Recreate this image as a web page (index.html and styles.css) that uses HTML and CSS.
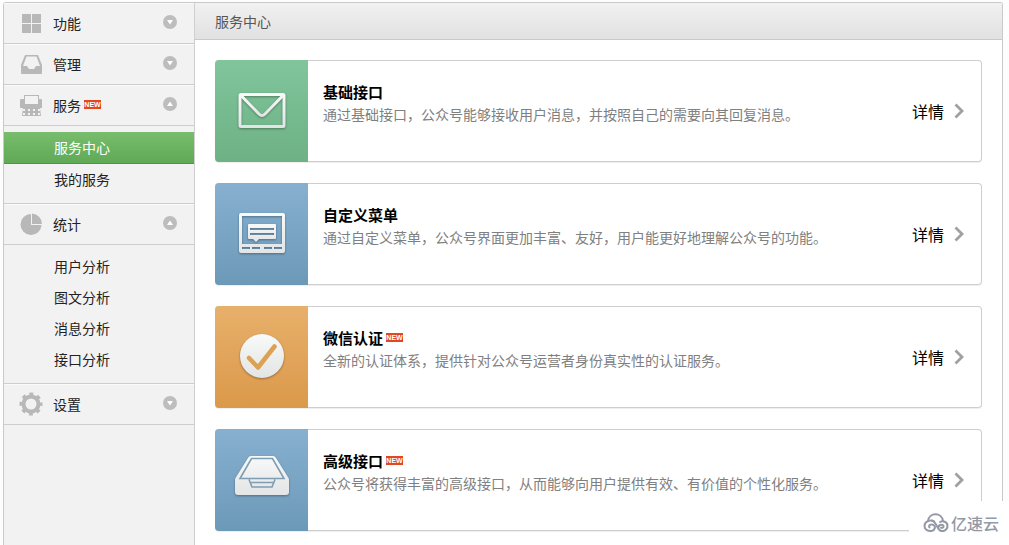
FILE: index.html
```html
<!DOCTYPE html>
<html lang="zh-CN">
<head>
<meta charset="utf-8">
<title>服务中心</title>
<link rel="stylesheet" href="styles.css">
</head>
<body>
<svg class="defs" aria-hidden="true">
  <defs>
    <linearGradient id="pale" x1="0" y1="0" x2="0" y2="1"><stop offset="0" stop-color="#f8fafa"/><stop offset="1" stop-color="#e2e4e5"/></linearGradient>
    <symbol id="down" viewBox="0 0 14 14"><circle cx="7" cy="7" r="7" fill="#bdbdbd"/><path d="M4 5h6L7 9.500z" fill="#fff"/></symbol>
    <symbol id="up" viewBox="0 0 14 14"><circle cx="7" cy="7" r="7" fill="#bdbdbd"/><path d="M4 9h6L7 4.500z" fill="#fff"/></symbol>
    <symbol id="chevron" viewBox="0 0 10 16"><path d="M1.500 1.500 8 8l-6.500 6.500" fill="none" stroke="#a0a0a0" stroke-width="2.800"/></symbol>
  </defs>
</svg>
<div class="shell">
  <nav class="sidebar" aria-label="主导航">
    <button class="group" type="button">
      <svg class="group-icon" viewBox="0 0 24 24"><path d="M3 3h9v9H3zM13 3h9v9h-9zM3 13h9v9H3zM13 13h9v9h-9z"/></svg>
      <span>功能</span><svg class="toggle"><use href="#down"/></svg>
    </button>
    <button class="group" type="button">
      <svg class="group-icon" viewBox="0 0 24 24"><path fill-rule="evenodd" d="M6 3h13l4 10v8q0 1-1 1H3q-1 0-1-1v-8zM7.500 4.500 4 14h4l2 3h5l2-3h4l-3.500-9.500z"/></svg>
      <span>管理</span><svg class="toggle"><use href="#down"/></svg>
    </button>
    <button class="group" type="button">
      <svg class="group-icon" viewBox="0 0 24 24"><path fill-rule="evenodd" d="M5 2h15v4h2q1 0 1 1v8h-2l1 8H3l1-8H1V7q0-1 1-1h3zM6 3v8h13V3zM4 16v2h2v-2zM9 16v2h2v-2zM14 16v2h2v-2zM19 16v2h2v-2zM4 20v2h2v-2zM9 20v2h2v-2zM14 20v2h2v-2zM19 20v2h2v-2z"/></svg>
      <span>服务</span><span class="new">NEW</span><svg class="toggle"><use href="#up"/></svg>
    </button>
    <div class="submenu">
      <a class="item active" href="#center">服务中心</a>
      <a class="item" href="#mine">我的服务</a>
    </div>
    <button class="group" type="button">
      <svg class="group-icon" viewBox="0 0 24 24"><path d="M12 2V13H22.500A10.500 10.500 0 1 1 12 2zM13 1.500A10.500 10.500 0 0 1 23 12H13z"/></svg>
      <span>统计</span><svg class="toggle"><use href="#up"/></svg>
    </button>
    <div class="submenu">
      <a class="item" href="#users">用户分析</a>
      <a class="item" href="#articles">图文分析</a>
      <a class="item" href="#messages">消息分析</a>
      <a class="item" href="#api">接口分析</a>
    </div>
    <button class="group" type="button">
      <svg class="group-icon" viewBox="0 0 24 24"><g fill="none" stroke="#b8b8b8"><circle cx="12" cy="12" r="7.500" stroke-width="4"/><circle cx="12" cy="12" r="10" stroke-width="3" stroke-dasharray="3.927 3.927" stroke-dashoffset="1.963"/></g></svg>
      <span>设置</span><svg class="toggle"><use href="#down"/></svg>
    </button>
  </nav>
  <main class="main">
    <h1 class="page-title">服务中心</h1>
    <div class="cards">
      <article class="card">
        <div class="thumb green"><svg viewBox="0 0 60 60"><g fill="none" stroke="url(#pale)" stroke-width="3" stroke-linejoin="round"><rect x="8" y="13.500" width="44" height="32" rx="1"/><path d="M9.500 15l17.500 18q3 3 6 0L50.500 15"/></g></svg></div>
        <div class="info"><h2>基础接口</h2><p>通过基础接口，公众号能够接收用户消息，并按照自己的需要向其回复消息。</p></div>
        <a class="detail" href="#basic">详情<svg><use href="#chevron"/></svg></a>
      </article>
      <article class="card">
        <div class="thumb blue"><svg viewBox="0 0 60 60"><path fill="url(#pale)" fill-rule="evenodd" d="M9 9h42q2 0 2 2v36q0 2-2 2H9q-2 0-2-2V11q0-2 2-2zM10 12v28h40V12zM10 43v2h8v-2zM20 43v2h8v-2zM32 43v2h8v-2zM42 43v2h8v-2z"/><path fill="url(#pale)" fill-rule="evenodd" d="M17 20h26q1 0 1 1v13q0 1-1 1H27l-3 3-3-3h-4q-1 0-1-1V21q0-1 1-1zM18 24v2h24v-2zM18 29v2h24v-2z"/></svg></div>
        <div class="info"><h2>自定义菜单</h2><p>通过自定义菜单，公众号界面更加丰富、友好，用户能更好地理解公众号的功能。</p></div>
        <a class="detail" href="#menu">详情<svg><use href="#chevron"/></svg></a>
      </article>
      <article class="card">
        <div class="thumb orange"><svg viewBox="0 0 60 60"><circle cx="30" cy="29" r="22" fill="url(#pale)"/><path d="M17 31l9 9.500 16.500-21" fill="none" stroke="#dda154" stroke-width="4.500" stroke-linecap="round" stroke-linejoin="round"/></svg></div>
        <div class="info"><h2>微信认证<span class="new">NEW</span></h2><p>全新的认证体系，提供针对公众号运营者身份真实性的认证服务。</p></div>
        <a class="detail" href="#verify">详情<svg><use href="#chevron"/></svg></a>
      </article>
      <article class="card">
        <div class="thumb blue"><svg viewBox="0 0 60 60"><path fill="url(#pale)" d="M19 6h22q2 0 3 2l12.500 20q.5 1 .5 2v12q0 3-3 3H6q-3 0-3-3V30q0-1 .5-2L16 8q1-2 3-2z"/><path d="M19.500 8.500h21L52 28.500H8zM17 29.500l3 7.500h20l3-7.500M19 32.500h22" fill="none" stroke="#7f9db3" stroke-width="1.600"/></svg></div>
        <div class="info"><h2>高级接口<span class="new">NEW</span></h2><p>公众号将获得丰富的高级接口，从而能够向用户提供有效、有价值的个性化服务。</p></div>
        <a class="detail" href="#advanced">详情<svg><use href="#chevron"/></svg></a>
      </article>
    </div>
  </main>
</div>
<div class="watermark">
  <svg viewBox="0 0 26 20"><g fill="none" stroke="#9499a6" stroke-width="2" stroke-linecap="round"><path d="M5 8C6-1 19-1 20 8"/><path d="M11 8.500C6 6 1.500 9 1.500 13s4 5.500 7 5c3.500-.6 4.500-4.500 2-6s-5.500.3-4 2.500"/><path d="M9 7.500c4 1 5 8 8 10 3 1.500 7.500-.5 7.500-4.500s-4.500-6-7.500-4"/><path d="M15.500 14c.5-3 5.500-3 5-.3-.2 1-1.500 1.300-2.500 1"/></g></svg>
  <span>亿速云</span>
</div>
</body>
</html>
```
FILE: styles.css
```css
* { box-sizing: border-box; }

body {
  margin: 0;
  height: 100vh;
  overflow: hidden;
  padding: 2px 6px 0 3px;
  background: #fdfdfd;
  color: #222;
  font: 14px/20px "Noto Sans CJK SC", sans-serif;
}

.defs { position: absolute; width: 0; height: 0; }

.shell {
  display: flex;
  min-height: 100%;
  border: 1px solid #c9c9c9;
  border-bottom: 0;
  border-radius: 3px 3px 0 0;
  background: #fff;
}

.sidebar {
  flex: 0 0 191px;
  border-right: 1px solid #cfcfcf;
  background: #f2f2f2;
}

.group {
  display: flex;
  align-items: center;
  width: 100%;
  height: 41px;
  padding: 0 17px 0 15px;
  border: 0;
  border-bottom: 1px solid #cdcdcd;
  background: none;
  box-shadow: inset 0 1px #fafafa;
  color: #222;
  font: inherit;
  text-align: left;
}

.group-icon {
  width: 24px;
  height: 24px;
  margin-right: 10px;
  fill: #b8b8b8;
}

.toggle {
  width: 14px;
  height: 14px;
  margin: 0 0 2px auto;
}

.new {
  width: 17px;
  height: 9px;
  margin: 0 0 2px 3px;
  background: #e1481f;
  color: #fff;
  font: bold 7px/9px "Liberation Sans", sans-serif;
  text-align: center;
}

.submenu {
  padding: 6px 0 8px;
  border-bottom: 1px solid #cdcdcd;
}

.item {
  display: block;
  padding-left: 50px;
  color: #222;
  line-height: 31px;
  text-decoration: none;
}

.item.active {
  border-bottom: 1px solid #529347;
  background: linear-gradient(#78bd6d, #60a955);
  color: #fff;
}

.main { flex: 1; min-width: 0; }

.page-title {
  margin: 0;
  padding: 8px 20px;
  border-bottom: 1px solid #c9c9c9;
  background: linear-gradient(#f1f1f1, #e1e1e1);
  color: #555;
  font-size: 14px;
  font-weight: 400;
}

.cards {
  display: grid;
  gap: 21px;
  padding: 20px;
}

.card {
  display: flex;
  align-items: center;
  min-height: 102px;
  border: 1px solid #cecece;
  border-left: 0;
  border-radius: 4px;
  box-shadow: 0 1px 1px #eee;
}

.thumb {
  display: flex;
  align-items: center;
  justify-content: center;
  align-self: stretch;
  flex: 0 0 93px;
  margin: -1px 0;
  border-radius: 4px 0 0 4px;
}

.thumb svg {
  width: 60px;
  height: 60px;
  filter: drop-shadow(0 1px 1px #0005);
}

.green { background: linear-gradient(#80c59c, #6db184); }
.blue { background: linear-gradient(#87b0d0, #6d99b9); }
.orange { background: linear-gradient(#e7b06b, #db994a); }

.info {
  flex: 1;
  align-self: flex-start;
  padding: 19px 15px;
}

.info h2 {
  display: flex;
  align-items: center;
  margin: 0;
  color: #000;
  font-size: 15px;
  line-height: 24px;
}

.info p { margin: 0; color: #808080; }

.detail {
  display: flex;
  align-items: center;
  gap: 10px;
  margin-right: 17px;
  color: #000;
  font-size: 16px;
  text-decoration: none;
  white-space: nowrap;
}

.detail svg { width: 10px; height: 16px; }

.watermark {
  position: absolute;
  right: 0;
  bottom: 0;
  display: flex;
  align-items: center;
  gap: 2px;
  width: 100px;
  height: 44px;
  padding-left: 14px;
  background: #fff;
  color: #9499a6;
  font-size: 16px;
  font-weight: 500;
}

.watermark svg { width: 26px; height: 20px; }
```
